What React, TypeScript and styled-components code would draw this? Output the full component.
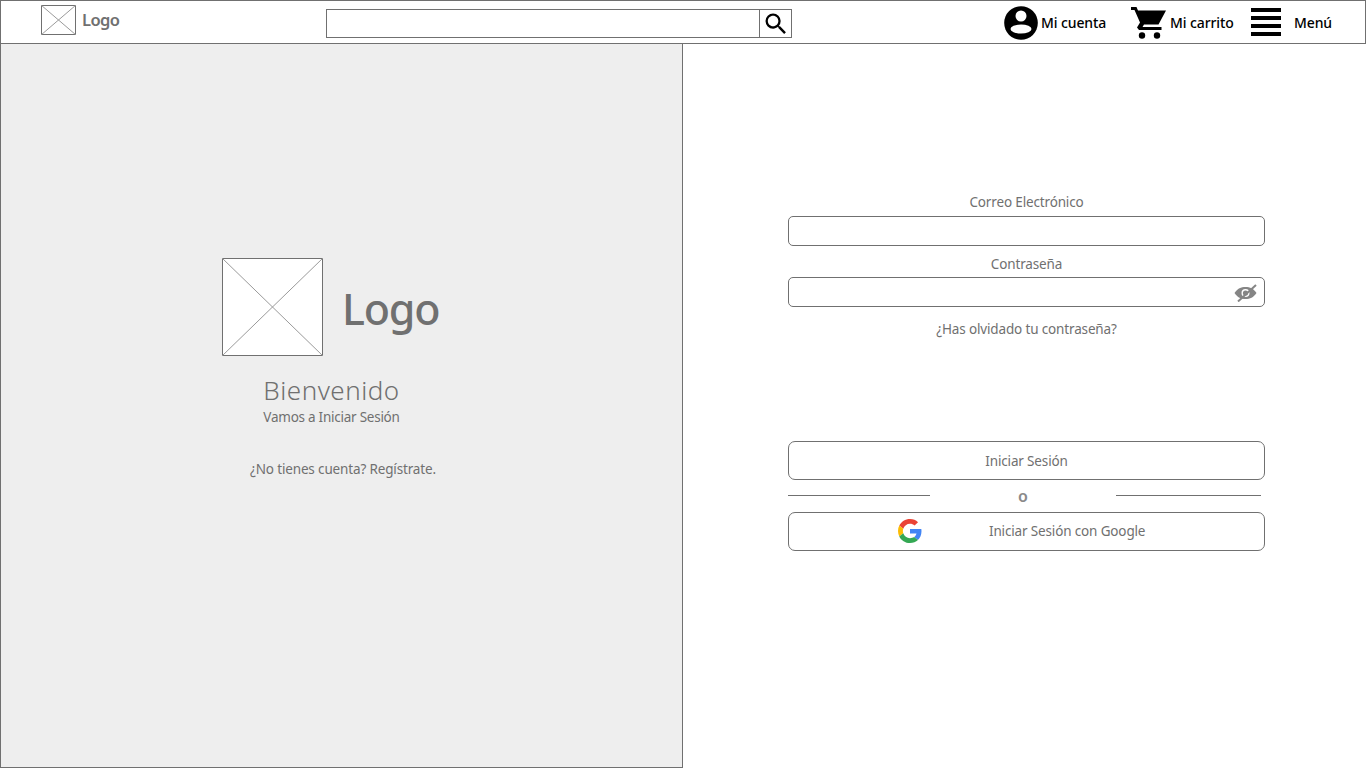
import React from 'react';
import styled, { createGlobalStyle } from 'styled-components';
import { MdSearch } from 'react-icons/md';

const GlobalStyle = createGlobalStyle`
  html, body {
    margin: 0;
    padding: 0;
    background: #fff;
  }
  * {
    box-sizing: border-box;
  }
`;

const Page = styled.div`
  width: 1366px;
  height: 768px;
  display: flex;
  flex-direction: column;
  overflow: hidden;
  font-family: 'Noto Sans', 'Open Sans', sans-serif;
  color: #707070;
`;

const Header = styled.header`
  height: 44px;
  flex-shrink: 0;
  display: flex;
  align-items: flex-start;
  border: 1px solid #707070;
  padding-left: 40px;
`;

const Brand = styled.div`
  width: 285px;
  display: flex;
  align-items: center;
  gap: 6px;
  margin-top: 4px;
  height: 30px;
`;

const BrandName = styled.span`
  font-size: 16.5px;
  font-weight: 600;
  letter-spacing: -0.6px;
  margin-top: -1px;
`;

const Placeholder = styled.svg<{ $w: number; $h: number }>`
  width: ${(p) => p.$w}px;
  height: ${(p) => p.$h}px;
  flex-shrink: 0;
  display: block;
  background: #fff;
`;

const SearchBox = styled.div`
  width: 466px;
  height: 29px;
  margin-top: 8px;
  display: flex;
  border: 1px solid #707070;
`;

const SearchInput = styled.div`
  flex: 1;
`;

const SearchButton = styled.div`
  width: 32px;
  border-left: 1px solid #707070;
  display: flex;
  align-items: center;
  justify-content: center;
  color: #000;
  font-size: 28px;
`;

const Nav = styled.nav`
  display: flex;
  align-items: center;
  height: 42px;
  margin-left: 212px;
  color: #000;
`;

const NavItem = styled.div<{ $gap: number; $width: number }>`
  display: flex;
  align-items: center;
  gap: ${(p) => p.$gap}px;
  width: ${(p) => p.$width}px;
  font-size: 14px;
  font-weight: 500;
  letter-spacing: -0.1px;
  white-space: nowrap;
`;

const NavGlyph = styled.svg<{ $top?: number }>`
  flex-shrink: 0;
  display: block;
  margin-top: ${(p) => p.$top ?? 0}px;
`;

const Body = styled.main`
  flex: 1;
  display: flex;
`;

const LeftPanel = styled.section`
  width: 683px;
  background: #eeeeee;
  border-left: 1px solid #707070;
  border-right: 1px solid #707070;
  border-bottom: 1px solid #707070;
  padding: 214px 0 0 221px;
`;

const BigLogo = styled.div`
  display: flex;
  align-items: center;
  gap: 19px;
`;

const BigLogoName = styled.span`
  font-size: 43px;
  font-weight: 500;
  line-height: 50px;
  letter-spacing: -1.2px;
  margin-top: 4px;
`;

const Welcome = styled.div`
  width: 219px;
  margin-top: 17px;
  display: flex;
  flex-direction: column;
  align-items: center;
`;

const WelcomeTitle = styled.h1`
  margin: 0;
  font-size: 26px;
  font-weight: 300;
  line-height: 34px;
  letter-spacing: 0.5px;
`;

const WelcomeSub = styled.p`
  margin: 0;
  font-size: 13.5px;
  line-height: 20px;
  letter-spacing: -0.25px;
`;

const SignUp = styled.p`
  margin: 32px 0 0 28px;
  font-size: 13.5px;
  line-height: 20px;
  letter-spacing: -0.15px;
`;

const RightPanel = styled.section`
  flex: 1;
  padding: 148px 0 0 105px;
`;

const Form = styled.form`
  width: 477px;
  display: flex;
  flex-direction: column;
`;

const FieldLabel = styled.label<{ $gap: number }>`
  height: 20px;
  margin-bottom: ${(p) => p.$gap}px;
  line-height: 20px;
  text-align: center;
  font-size: 13.5px;
  letter-spacing: -0.15px;
`;

const Field = styled.div`
  height: 30px;
  margin-bottom: 8px;
  padding-right: 7px;
  display: flex;
  align-items: center;
  justify-content: flex-end;
  border: 1px solid #707070;
  border-radius: 5px;
  background: #fff;
`;

const EyeIcon = styled.svg`
  width: 24px;
  height: 20px;
  display: block;
`;

const ForgotLink = styled.div`
  margin-top: 4px;
  height: 20px;
  line-height: 20px;
  text-align: center;
  font-size: 13.5px;
  letter-spacing: -0.15px;
`;

const Actions = styled.div`
  margin-top: 102px;
  display: flex;
  flex-direction: column;
`;

const PrimaryButton = styled.div`
  height: 39px;
  display: flex;
  align-items: center;
  justify-content: center;
  border: 1px solid #707070;
  border-radius: 7px;
  font-size: 13.5px;
  letter-spacing: -0.15px;
`;

const Divider = styled.div`
  height: 32px;
  display: flex;
  align-items: flex-start;
  width: 473px;
`;

const Rule = styled.div<{ $width: number }>`
  width: ${(p) => p.$width}px;
  height: 1px;
  margin-top: 15px;
  background: #707070;
`;

const Or = styled.span`
  width: 186px;
  padding-top: 6px;
  text-align: center;
  font-size: 16px;
  line-height: 20px;
  font-weight: 600;
  color: #8a8a8a;
`;

const GoogleButton = styled.div`
  height: 39px;
  display: flex;
  align-items: center;
  padding-left: 109px;
  border: 1px solid #707070;
  border-radius: 7px;
  font-size: 13.5px;
  letter-spacing: -0.15px;
`;

const GoogleLabel = styled.span`
  margin: -2px 0 0 67px;
`;

const GoogleMark = styled.svg`
  width: 24px;
  height: 24px;
  margin-top: -2px;
  display: block;
`;

function CrossBox({ w, h }: { w: number; h: number }) {
  return (
    <Placeholder $w={w} $h={h} viewBox={`0 0 ${w} ${h}`}>
      <rect x="0.5" y="0.5" width={w - 1} height={h - 1} fill="#fff" stroke="#707070" />
      <line x1="0" y1="0" x2={w} y2={h} stroke="#9a9a9a" />
      <line x1={w} y1="0" x2="0" y2={h} stroke="#9a9a9a" />
    </Placeholder>
  );
}

export default function App() {
  return (
    <>
      <GlobalStyle />
      <Page>
        <Header>
          <Brand>
            <CrossBox w={35} h={30} />
            <BrandName>Logo</BrandName>
          </Brand>
          <SearchBox>
            <SearchInput />
            <SearchButton>
              <MdSearch />
            </SearchButton>
          </SearchBox>
          <Nav>
            <NavItem $gap={3} $width={127}>
              <NavGlyph $top={2} width="34" height="34" viewBox="0 0 34 34">
                <circle cx="17" cy="17" r="16.800" />
                <circle cx="17" cy="10" r="5.500" fill="#fff" />
                <ellipse cx="17" cy="23" rx="10.500" ry="4.500" fill="#fff" />
              </NavGlyph>
              <span>Mi cuenta</span>
            </NavItem>
            <NavItem $gap={4} $width={120}>
              <NavGlyph $top={2} width="35" height="32" viewBox="0 0 35 32">
                <path d="M0 0H5.500L7 3.500H35L27.500 17.500H13L11.500 20H30.500V23H8L6 20.500L9 15.500L3.500 3H0Z" />
                <circle cx="11" cy="28.500" r="3.200" />
                <circle cx="26" cy="28.500" r="3.200" />
              </NavGlyph>
              <span>Mi carrito</span>
            </NavItem>
            <NavItem $gap={13} $width={90}>
              <NavGlyph width="30" height="28" viewBox="0 0 30 28">
                <rect y="0" width="30" height="4" />
                <rect y="8" width="30" height="4" />
                <rect y="16" width="30" height="4" />
                <rect y="24" width="30" height="4" />
              </NavGlyph>
              <span>Menú</span>
            </NavItem>
          </Nav>
        </Header>
        <Body>
          <LeftPanel>
            <BigLogo>
              <CrossBox w={101} h={98} />
              <BigLogoName>Logo</BigLogoName>
            </BigLogo>
            <Welcome>
              <WelcomeTitle>Bienvenido</WelcomeTitle>
              <WelcomeSub>Vamos a Iniciar Sesión</WelcomeSub>
            </Welcome>
            <SignUp>¿No tienes cuenta? Regístrate.</SignUp>
          </LeftPanel>
          <RightPanel>
            <Form>
              <FieldLabel $gap={4}>Correo Electrónico</FieldLabel>
              <Field />
              <FieldLabel $gap={3}>Contraseña</FieldLabel>
              <Field>
                <EyeIcon viewBox="0 0 24 20">
                  <path
                    fill="#858585"
                    d="M1.500 11C4.500 6.500 8 5 12.500 5S20.500 6.500 23.500 11C20.500 15.500 17 17 12.500 17S4.500 15.500 1.500 11Z"
                  />
                  <circle cx="12.500" cy="11" r="4" fill="#fff" />
                  <circle cx="12.500" cy="11" r="2.600" fill="#858585" />
                  <path d="M5 19.500L23 3" stroke="#858585" strokeWidth="2" />
                </EyeIcon>
              </Field>
              <ForgotLink>¿Has olvidado tu contraseña?</ForgotLink>
              <Actions>
                <PrimaryButton>Iniciar Sesión</PrimaryButton>
                <Divider>
                  <Rule $width={142} />
                  <Or>o</Or>
                  <Rule $width={145} />
                </Divider>
                <GoogleButton>
                  <GoogleMark viewBox="0 0 48 48">
                    <path fill="#EA4335" d="M24 9.500c3.540 0 6.710 1.220 9.210 3.600l6.850-6.850C35.900 2.380 30.470 0 24 0 14.620 0 6.510 5.380 2.560 13.220l7.980 6.190C12.430 13.720 17.740 9.500 24 9.500z" />
                    <path fill="#4285F4" d="M46.980 24.550c0-1.570-.15-3.090-.38-4.550H24v9.020h12.940c-.58 2.960-2.260 5.480-4.780 7.180l7.730 6c4.510-4.180 7.090-10.360 7.090-17.650z" />
                    <path fill="#FBBC05" d="M10.530 28.590c-.48-1.450-.76-2.990-.76-4.590s.27-3.140.76-4.590l-7.980-6.190C.92 16.460 0 20.120 0 24c0 3.880.92 7.540 2.560 10.780l7.970-6.190z" />
                    <path fill="#34A853" d="M24 48c6.480 0 11.930-2.130 15.890-5.810l-7.730-6c-2.150 1.450-4.920 2.300-8.160 2.300-6.260 0-11.570-4.220-13.470-9.910l-7.980 6.190C6.510 42.620 14.620 48 24 48z" />
                  </GoogleMark>
                  <GoogleLabel>Iniciar Sesión con Google</GoogleLabel>
                </GoogleButton>
              </Actions>
            </Form>
          </RightPanel>
        </Body>
      </Page>
    </>
  );
}
